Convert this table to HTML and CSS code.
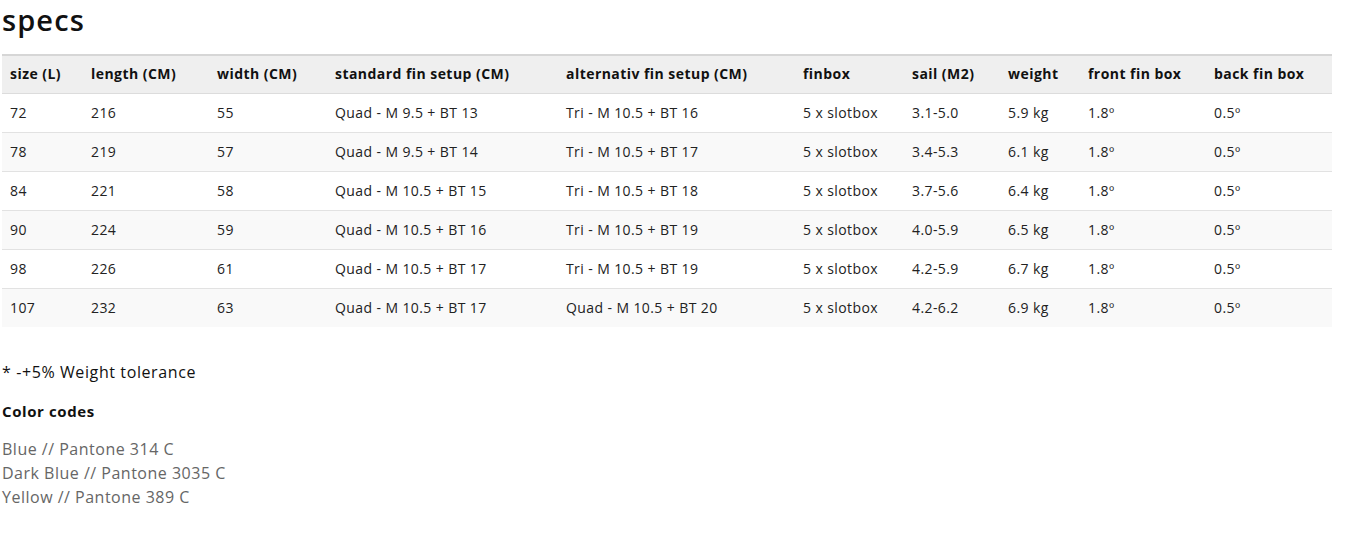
FILE: index.html
```html
<!DOCTYPE html>
<html>
<head>
<meta charset="utf-8">
<link rel="stylesheet" href="styles.css">
</head>
<body>
<main class="page">
  <h2 class="title">specs</h2>
  <table class="specs">
    <colgroup>
      <col class="c1"><col class="c2"><col class="c3"><col class="c4"><col class="c5">
      <col class="c6"><col class="c7"><col class="c8"><col class="c9"><col class="c10">
    </colgroup>
    <thead>
      <tr>
        <th>size (L)</th><th>length (CM)</th><th>width (CM)</th><th>standard fin setup (CM)</th><th>alternativ fin setup (CM)</th><th>finbox</th><th>sail (M2)</th><th>weight</th><th>front fin box</th><th>back fin box</th>
      </tr>
    </thead>
    <tbody>
      <tr><td>72</td><td>216</td><td>55</td><td>Quad - M 9.5 + BT 13</td><td>Tri - M 10.5 + BT 16</td><td>5 x slotbox</td><td>3.1-5.0</td><td>5.9 kg</td><td>1.8º</td><td>0.5º</td></tr>
      <tr><td>78</td><td>219</td><td>57</td><td>Quad - M 9.5 + BT 14</td><td>Tri - M 10.5 + BT 17</td><td>5 x slotbox</td><td>3.4-5.3</td><td>6.1 kg</td><td>1.8º</td><td>0.5º</td></tr>
      <tr><td>84</td><td>221</td><td>58</td><td>Quad - M 10.5 + BT 15</td><td>Tri - M 10.5 + BT 18</td><td>5 x slotbox</td><td>3.7-5.6</td><td>6.4 kg</td><td>1.8º</td><td>0.5º</td></tr>
      <tr><td>90</td><td>224</td><td>59</td><td>Quad - M 10.5 + BT 16</td><td>Tri - M 10.5 + BT 19</td><td>5 x slotbox</td><td>4.0-5.9</td><td>6.5 kg</td><td>1.8º</td><td>0.5º</td></tr>
      <tr><td>98</td><td>226</td><td>61</td><td>Quad - M 10.5 + BT 17</td><td>Tri - M 10.5 + BT 19</td><td>5 x slotbox</td><td>4.2-5.9</td><td>6.7 kg</td><td>1.8º</td><td>0.5º</td></tr>
      <tr><td>107</td><td>232</td><td>63</td><td>Quad - M 10.5 + BT 17</td><td>Quad - M 10.5 + BT 20</td><td>5 x slotbox</td><td>4.2-6.2</td><td>6.9 kg</td><td>1.8º</td><td>0.5º</td></tr>
    </tbody>
  </table>
  <p class="note">* -+5% Weight tolerance</p>
  <p class="codes-title">Color codes</p>
  <p class="codes">Blue // Pantone 314 C<br>Dark Blue // Pantone 3035 C<br>Yellow // Pantone 389 C</p>
</main>
</body>
</html>
```

FILE: styles.css
```css
html, body {
  margin: 0;
  padding: 0;
  background: #fff;
}
body {
  font-family: "Open Sans", "Liberation Sans", sans-serif;
  color: #111;
}
.page {
  padding: 0 23px 0 2px;
}
.title {
  margin: 0;
  padding-top: 3px;
  height: 51px;
  font-size: 29px;
  font-weight: 600;
  letter-spacing: 1.1px;
  line-height: 34px;
  color: #111;
}
.specs {
  width: 1330px;
  border-collapse: collapse;
  table-layout: fixed;
  font-size: 14px;
}
.c1 { width: 81px; }
.c2 { width: 126px; }
.c3 { width: 118px; }
.c4 { width: 231px; }
.c5 { width: 237px; }
.c6 { width: 109px; }
.c7 { width: 96px; }
.c8 { width: 80px; }
.c9 { width: 126px; }
.c10 { width: 126px; }
.specs thead tr {
  background: #efefef;
  border-top: 2px solid #d6d6d6;
  border-bottom: 1px solid #dcdcdc;
}
.specs th {
  text-align: left;
  font-weight: 700;
  letter-spacing: 0.45px;
  color: #111;
  padding: 0 8px 3px;
  height: 34px;
  white-space: nowrap;
}
.specs td {
  padding: 0 8px 2px;
  height: 36px;
  color: #222;
  letter-spacing: 0.4px;
  white-space: nowrap;
}
.specs tbody tr {
  border-top: 1px solid #e2e2e2;
}
.specs tbody tr:first-child {
  border-top: none;
}
.specs tbody tr:nth-child(even) {
  background: #f9f9f9;
}
.note {
  margin: 33px 0 0;
  font-size: 16px;
  line-height: 24px;
  letter-spacing: 0.6px;
  color: #111;
}
.codes-title {
  margin: 15px 0 0;
  font-size: 15px;
  font-weight: 700;
  letter-spacing: 0.6px;
  line-height: 24px;
  color: #111;
}
.codes {
  margin: 14px 0 0;
  font-size: 16px;
  line-height: 24px;
  letter-spacing: 0.5px;
  color: #666;
}
```
